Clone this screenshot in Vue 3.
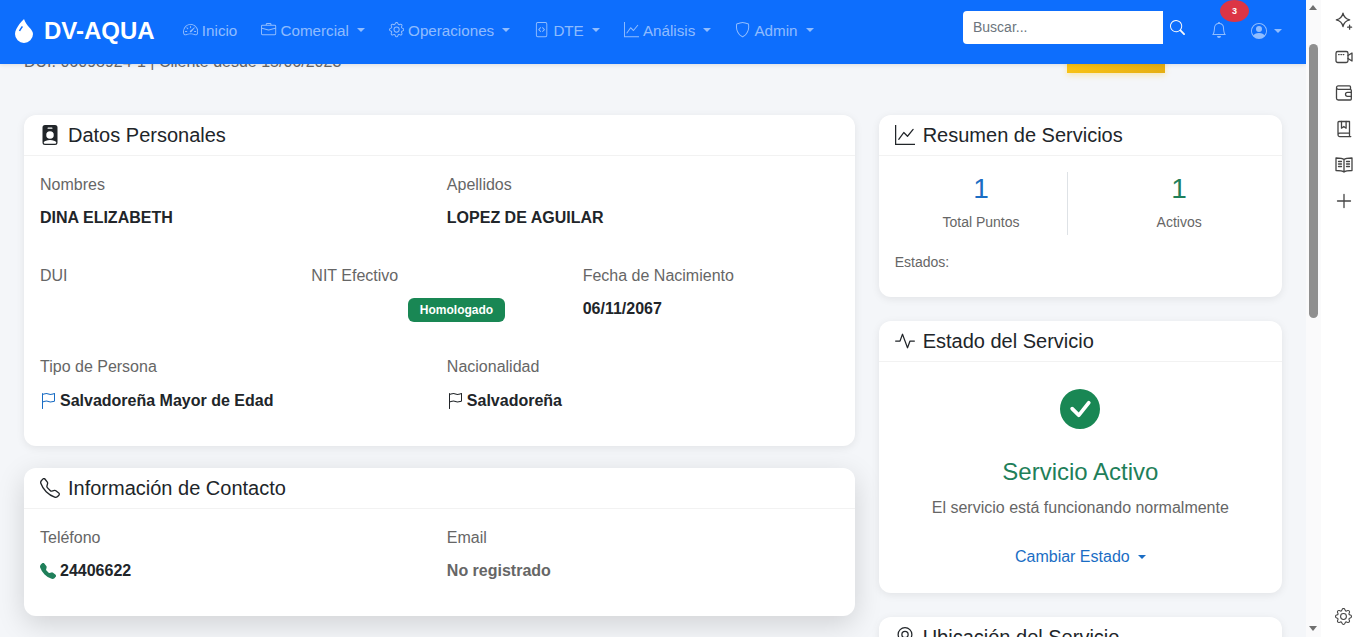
<template>
  <div class="page">
    <div class="main">
      <nav class="navbar">
        <div class="brand">
          <svg class="brand-icon" viewBox="0 0 16 16"><path :d="icons.droplet" /></svg>
          <span>DV-AQUA</span>
        </div>
        <ul class="nav-links">
          <li v-for="link in links" :key="link.label" class="nav-link">
            <svg class="nav-icon" viewBox="0 0 16 16"><path :d="icons[link.icon]" /></svg>
            <span>{{ link.label }}</span>
            <i v-if="link.menu" class="caret"></i>
          </li>
        </ul>
        <div class="nav-right">
          <div class="search-input">Buscar...</div>
          <svg class="search-icon" viewBox="0 0 16 16"><path :d="icons.search" /></svg>
          <div class="bell">
            <svg viewBox="0 0 16 16"><path :d="icons.bell" /></svg>
            <span class="badge-count">3</span>
          </div>
          <svg class="user-icon" viewBox="0 0 16 16"><path :d="icons.person" /></svg>
          <i class="caret user-caret"></i>
        </div>
      </nav>

      <div class="scroller">
        <header class="page-head">
          <p class="page-sub">DUI: 06098924-1 | Cliente desde 15/06/2023</p>
          <div class="edit-btn"></div>
        </header>

        <div class="columns">
          <div class="col">
            <section class="card">
              <h5 class="card-head">
                <svg class="head-icon" viewBox="0 0 16 16"><path :d="icons.badge" fill-rule="evenodd" /></svg>
                Datos Personales
              </h5>
              <div class="card-body">
                <div class="fields two">
                  <div class="field">
                    <div class="label">Nombres</div>
                    <div class="value">DINA ELIZABETH</div>
                  </div>
                  <div class="field">
                    <div class="label">Apellidos</div>
                    <div class="value">LOPEZ DE AGUILAR</div>
                  </div>
                </div>
                <div class="fields three">
                  <div class="field">
                    <div class="label">DUI</div>
                  </div>
                  <div class="field">
                    <div class="label">NIT Efectivo</div>
                    <div class="value"><span class="pill">Homologado</span></div>
                  </div>
                  <div class="field">
                    <div class="label">Fecha de Nacimiento</div>
                    <div class="value">06/11/2067</div>
                  </div>
                </div>
                <div class="fields two flags">
                  <div class="field">
                    <div class="label">Tipo de Persona</div>
                    <div class="value with-icon">
                      <svg class="val-icon blue" viewBox="0 0 16 16"><path :d="icons.flag" /></svg>
                      Salvadoreña Mayor de Edad
                    </div>
                  </div>
                  <div class="field">
                    <div class="label">Nacionalidad</div>
                    <div class="value with-icon">
                      <svg class="val-icon" viewBox="0 0 16 16"><path :d="icons.flag" /></svg>
                      Salvadoreña
                    </div>
                  </div>
                </div>
              </div>
            </section>

            <section class="card card-raised">
              <h5 class="card-head">
                <svg class="head-icon" viewBox="0 0 16 16"><path :d="icons.telephone" /></svg>
                Información de Contacto
              </h5>
              <div class="card-body">
                <div class="fields two">
                  <div class="field">
                    <div class="label">Teléfono</div>
                    <div class="value with-icon">
                      <svg class="val-icon green" viewBox="0 0 16 16"><path :d="icons.telephoneFill" /></svg>
                      24406622
                    </div>
                  </div>
                  <div class="field">
                    <div class="label">Email</div>
                    <div class="value muted">No registrado</div>
                  </div>
                </div>
              </div>
            </section>
          </div>

          <div class="col col-right">
            <section class="card">
              <h5 class="card-head">
                <svg class="head-icon" viewBox="0 0 16 16"><path :d="icons.graph" /></svg>
                Resumen de Servicios
              </h5>
              <div class="card-body summary">
                <div class="stats">
                  <div class="stat stat-split">
                    <div class="stat-num blue">1</div>
                    <div class="stat-label">Total Puntos</div>
                  </div>
                  <div class="stat">
                    <div class="stat-num green">1</div>
                    <div class="stat-label">Activos</div>
                  </div>
                </div>
                <div class="states">Estados:</div>
              </div>
            </section>

            <section class="card">
              <h5 class="card-head">
                <svg class="head-icon" viewBox="0 0 16 16"><path :d="icons.activity" /></svg>
                Estado del Servicio
              </h5>
              <div class="card-body status">
                <svg class="status-icon" viewBox="0 0 16 16"><path :d="icons.check" /></svg>
                <div class="status-title">Servicio Activo</div>
                <div class="status-text">El servicio está funcionando normalmente</div>
                <div class="status-btn">Cambiar Estado<i class="caret"></i></div>
              </div>
            </section>

            <section class="card">
              <h5 class="card-head">
                <svg class="head-icon" viewBox="0 0 16 16"><path :d="icons.geo" /></svg>
                Ubicación del Servicio
              </h5>
            </section>
          </div>
        </div>
      </div>
    </div>

    <div class="scrollbar">
      <i class="arrow-up"></i>
      <div class="thumb"></div>
      <i class="arrow-down"></i>
    </div>

    <aside class="side-panel">
      <div class="side-btn">
        <svg viewBox="0 0 20 20"><path d="M9 2.2c.8 3.9 2.8 5.9 6.7 6.7-3.9.8-5.9 2.8-6.7 6.7-.8-3.9-2.8-5.9-6.7-6.7 3.9-.8 5.9-2.8 6.7-6.7z" /><path d="M15.6 14.2v4M13.6 16.2h4" /></svg>
      </div>
      <div class="side-btn">
        <svg viewBox="0 0 20 20"><rect x="2" y="4.5" width="12" height="11" rx="1.8" /><path d="M14 8.5l4-2.500v8l-4-2.500M4.600 7.600h.6M6.900 7.600h.6M9.200 7.600h.6" /></svg>
      </div>
      <div class="side-btn">
        <svg viewBox="0 0 20 20"><path d="M2.500 5.500v9.700a1.800 1.800 0 0 0 1.800 1.800h12a1 1 0 0 0 1-1V7.300a1 1 0 0 0-1-1H4.200a1.700 1.700 0 0 1 0-3.400h11.300a1 1 0 0 1 1 1v2.400" /><path d="M17.300 9.300h-3.800a2 2 0 0 0 0 4h3.800" /></svg>
      </div>
      <div class="side-btn">
        <svg viewBox="0 0 20 20"><path d="M4 15V3.500a1 1 0 0 1 1-1h10.500v11.700H5.600A1.700 1.700 0 0 0 4 16a1.700 1.700 0 0 0 1.600 1.600h11.200M15.500 14.200v3.300" /><path d="M7.500 2.500v6.700l2.300-1.700 2.300 1.700V2.500" /></svg>
      </div>
      <div class="side-btn">
        <svg viewBox="0 0 20 20"><path d="M10 4.500C8.800 3.400 7 3 2 3v12.500c5 0 6.800.4 8 1.500 1.200-1.100 3-1.500 8-1.500V3c-5 0-6.800.4-8 1.500zM10 4.500V17" /><path d="M4.500 6.500h3M4.500 9h3M4.500 11.500h3M12.500 6.500h3M12.500 9h3M12.500 11.500h3" /></svg>
      </div>
      <div class="side-btn">
        <svg viewBox="0 0 20 20"><path d="M10 3.500v13M3.500 10h13" /></svg>
      </div>
      <div class="side-btn side-bottom">
        <svg class="side-fill" viewBox="0 0 16 16"><path :d="icons.gear" /></svg>
      </div>
    </aside>
  </div>
</template>

<script setup>
const icons = {
  droplet: 'M8 16a6 6 0 0 0 6-6c0-1.655-1.122-2.904-2.432-4.362C10.254 4.176 8.75 2.503 8 0c0 0-6 5.686-6 10a6 6 0 0 0 6 6M6.646 4.646l.708.708c-.29.29-1.128 1.311-1.907 2.87l-.894-.448c.82-1.641 1.717-2.753 2.093-3.13',
  speedometer: 'M8 4a.5.5 0 0 1 .5.5V6a.5.5 0 0 1-1 0V4.5A.5.5 0 0 1 8 4M3.732 5.732a.5.5 0 0 1 .707 0l.915.914a.5.5 0 1 1-.708.708l-.914-.915a.5.5 0 0 1 0-.707M2 10a.5.5 0 0 1 .5-.5h1.586a.5.5 0 0 1 0 1H2.5A.5.5 0 0 1 2 10m9.5 0a.5.5 0 0 1 .5-.5h1.5a.5.5 0 0 1 0 1H12a.5.5 0 0 1-.5-.5m.754-4.246a.39.39 0 0 0-.527-.02L7.547 9.31a.91.91 0 1 0 1.302 1.258l3.434-4.297a.39.39 0 0 0-.029-.518zM0 10a8 8 0 1 1 15.547 2.661c-.442 1.253-1.845 1.602-2.932 1.25C11.309 13.488 9.475 13 8 13c-1.474 0-3.31.488-4.615.911-1.087.352-2.49.003-2.932-1.25A8 8 0 0 1 0 10m8-7a7 7 0 0 0-6.603 9.329c.203.575.923.876 1.68.63C4.397 12.533 6.358 12 8 12s3.604.532 4.923.96c.757.245 1.477-.056 1.68-.631A7 7 0 0 0 8 3',
  briefcase: 'M6.5 1A1.5 1.5 0 0 0 5 2.5V3H1.5A1.5 1.5 0 0 0 0 4.5v8A1.5 1.5 0 0 0 1.5 14h13a1.5 1.5 0 0 0 1.5-1.5v-8A1.5 1.5 0 0 0 14.5 3H11v-.5A1.5 1.5 0 0 0 9.5 1zm0 1h3a.5.5 0 0 1 .5.5V3H6v-.5a.5.5 0 0 1 .5-.5m1.886 6.914L15 7.151V12.5a.5.5 0 0 1-.5.5h-13a.5.5 0 0 1-.5-.5V7.15l6.614 1.764a1.5 1.5 0 0 0 .772 0M1.5 4h13a.5.5 0 0 1 .5.5v1.616L8.129 7.948a.5.5 0 0 1-.258 0L1 6.116V4.5a.5.5 0 0 1 .5-.5',
  gear: 'M8 4.754a3.246 3.246 0 1 0 0 6.492 3.246 3.246 0 0 0 0-6.492M5.754 8a2.246 2.246 0 1 1 4.492 0 2.246 2.246 0 0 1-4.492 0M9.796 1.343c-.527-1.79-3.065-1.79-3.592 0l-.094.319a.873.873 0 0 1-1.255.52l-.292-.16c-1.64-.892-3.433.902-2.54 2.541l.159.292a.873.873 0 0 1-.52 1.255l-.319.094c-1.79.527-1.79 3.065 0 3.592l.319.094a.873.873 0 0 1 .52 1.255l-.16.292c-.892 1.64.901 3.434 2.541 2.54l.292-.159a.873.873 0 0 1 1.255.52l.094.319c.527 1.79 3.065 1.79 3.592 0l.094-.319a.873.873 0 0 1 1.255-.52l.292.16c1.64.893 3.434-.902 2.54-2.541l-.159-.292a.873.873 0 0 1 .52-1.255l.319-.094c1.79-.527 1.79-3.065 0-3.592l-.319-.094a.873.873 0 0 1-.52-1.255l.16-.292c.893-1.64-.902-3.433-2.541-2.54l-.292.159a.873.873 0 0 1-1.255-.52zm-2.633.283c.246-.835 1.428-.835 1.674 0l.094.319a1.873 1.873 0 0 0 2.693 1.115l.291-.16c.764-.415 1.6.42 1.184 1.185l-.159.292a1.873 1.873 0 0 0 1.116 2.692l.318.094c.835.246.835 1.428 0 1.674l-.319.094a1.873 1.873 0 0 0-1.115 2.693l.16.291c.415.764-.42 1.6-1.185 1.184l-.291-.159a1.873 1.873 0 0 0-2.693 1.116l-.094.318c-.246.835-1.428.835-1.674 0l-.094-.319a1.873 1.873 0 0 0-2.692-1.115l-.292.16c-.764.415-1.6-.42-1.184-1.185l.159-.291A1.873 1.873 0 0 0 1.945 8.93l-.319-.094c-.835-.246-.835-1.428 0-1.674l.319-.094A1.873 1.873 0 0 0 3.06 4.377l-.16-.292c-.415-.764.42-1.6 1.185-1.184l.292.159a1.873 1.873 0 0 0 2.692-1.115z',
  fileCode: 'M6.646 5.646a.5.5 0 1 1 .708.708L5.707 8l1.647 1.646a.5.5 0 0 1-.708.708l-2-2a.5.5 0 0 1 0-.708zm2.708 0a.5.5 0 1 0-.708.708L10.293 8 8.646 9.646a.5.5 0 0 0 .708.708l2-2a.5.5 0 0 0 0-.708zM2 2a2 2 0 0 1 2-2h8a2 2 0 0 1 2 2v12a2 2 0 0 1-2 2H4a2 2 0 0 1-2-2zm10-1H4a1 1 0 0 0-1 1v12a1 1 0 0 0 1 1h8a1 1 0 0 0 1-1V2a1 1 0 0 0-1-1',
  graph: 'M0 0h1v15h15v1H0zm14.817 3.113a.5.5 0 0 1 .07.704l-4.5 5.5a.5.5 0 0 1-.74.037L7.06 6.767l-3.656 5.027a.5.5 0 0 1-.808-.588l4-5.5a.5.5 0 0 1 .758-.06l2.609 2.61 4.15-5.073a.5.5 0 0 1 .704-.07',
  shield: 'M5.338 1.59a61 61 0 0 0-2.837.856.48.48 0 0 0-.328.39c-.554 4.157.726 7.19 2.253 9.188a10.7 10.7 0 0 0 2.287 2.233c.346.244.652.42.893.533q.18.085.293.118a1 1 0 0 0 .101.025 1 1 0 0 0 .1-.025q.114-.034.294-.118c.24-.113.547-.29.893-.533a10.7 10.7 0 0 0 2.287-2.233c1.527-1.997 2.807-5.031 2.253-9.188a.48.48 0 0 0-.328-.39c-.651-.213-1.75-.56-2.837-.855C9.552 1.29 8.531 1.067 8 1.067c-.53 0-1.552.223-2.662.524zM5.072.56C6.157.265 7.31 0 8 0s1.843.265 2.928.56c1.11.3 2.229.655 2.887.87a1.54 1.54 0 0 1 1.044 1.262c.596 4.477-.787 7.795-2.465 9.99a11.8 11.8 0 0 1-2.517 2.453 7 7 0 0 1-1.048.625c-.28.132-.581.24-.829.24s-.548-.108-.829-.24a7 7 0 0 1-1.048-.625 11.8 11.8 0 0 1-2.517-2.453C1.928 10.487.545 7.169 1.141 2.692A1.54 1.54 0 0 1 2.185 1.43 63 63 0 0 1 5.072.56',
  search: 'M11.742 10.344a6.5 6.5 0 1 0-1.397 1.398h-.001q.044.06.098.115l3.85 3.85a1 1 0 0 0 1.415-1.414l-3.85-3.85a1 1 0 0 0-.115-.1zM12 6.5a5.5 5.5 0 1 1-11 0 5.5 5.5 0 0 1 11 0',
  bell: 'M8 16a2 2 0 0 0 2-2H6a2 2 0 0 0 2 2M8 1.918l-.797.161A4 4 0 0 0 4 6c0 .628-.134 2.197-.459 3.742-.16.767-.376 1.566-.663 2.258h10.244c-.287-.692-.502-1.49-.663-2.258C12.134 8.197 12 6.628 12 6a4 4 0 0 0-3.203-3.92zM14.22 12c.223.447.481.801.78 1H1c.299-.199.557-.553.78-1C2.68 10.2 3 6.880 3 6c0-2.420 1.720-4.440 4.005-4.901a1 1 0 1 1 1.990 0A5 5 0 0 1 13 6c0 .880.320 4.200 1.220 6',
  person: 'M11 6a3 3 0 1 1-6 0 3 3 0 0 1 6 0M0 8a8 8 0 1 1 16 0A8 8 0 0 1 0 8m8-7a7 7 0 0 0-5.468 11.370C3.242 11.226 4.805 10 8 10s4.757 1.225 5.468 2.370A7 7 0 0 0 8 1',
  badge: 'M2 2a2 2 0 0 1 2-2h8a2 2 0 0 1 2 2v12a2 2 0 0 1-2 2H4a2 2 0 0 1-2-2zm4.500 0a.5.5 0 0 0 0 1h3a.5.5 0 0 0 0-1zM8 11a3 3 0 1 0 0-6 3 3 0 0 0 0 6m5 2.755C12.146 12.825 10.623 12 8 12s-4.146.826-5 1.755V14a1 1 0 0 0 1 1h8a1 1 0 0 0 1-1z',
  flag: 'M14.778.085A.5.5 0 0 1 15 .5V8a.5.5 0 0 1-.314.464L14.500 8l.186.464-.003.001-.006.003-.023.009a12 12 0 0 1-.397.150c-.264.095-.631.223-1.047.350-.816.252-1.879.523-2.710.523-.847 0-1.548-.280-2.158-.525l-.028-.010C7.680 8.710 7.140 8.500 6.500 8.500c-.700 0-1.638.230-2.437.477A20 20 0 0 0 3 9.342V15.500a.5.5 0 0 1-1 0V.500a.5.5 0 0 1 1 0v.282c.226-.079.496-.170.790-.260C4.606.272 5.670 0 6.500 0c.840 0 1.524.277 2.121.519l.043.018C9.286.788 9.828 1 10.500 1c.700 0 1.638-.230 2.437-.477a20 20 0 0 0 1.349-.476l.019-.007.004-.002h.001M14 1.221c-.220.078-.480.167-.766.255-.810.252-1.872.523-2.734.523-.886 0-1.592-.286-2.203-.534l-.008-.003C7.662 1.210 7.139 1 6.500 1c-.669 0-1.606.229-2.415.478A21 21 0 0 0 3 1.845v6.433c.220-.078.480-.167.766-.255C4.576 7.770 5.638 7.500 6.500 7.500c.847 0 1.548.280 2.158.525l.028.010C9.320 8.290 9.860 8.500 10.500 8.500c.668 0 1.606-.229 2.415-.478A21 21 0 0 0 14 7.655V1.222z',
  telephone: 'M3.654 1.328a.678.678 0 0 0-1.015-.063L1.605 2.300c-.483.484-.661 1.169-.450 1.770a17.600 17.600 0 0 0 4.168 6.608 17.600 17.600 0 0 0 6.608 4.168c.601.211 1.286.033 1.770-.450l1.034-1.034a.678.678 0 0 0-.063-1.015l-2.307-1.794a.68.68 0 0 0-.580-.122l-2.190.547a1.750 1.750 0 0 1-1.657-.459L5.482 8.062a1.750 1.750 0 0 1-.460-1.657l.548-2.190a.68.68 0 0 0-.122-.580zM1.884.511a1.745 1.745 0 0 1 2.612.163L6.290 2.980c.329.423.445.974.315 1.494l-.547 2.190a.68.68 0 0 0 .178.643l2.457 2.457a.68.68 0 0 0 .644.178l2.189-.547a1.750 1.750 0 0 1 1.494.315l2.306 1.794c.829.645.905 1.870.163 2.611l-1.034 1.034c-.740.740-1.846 1.065-2.877.702a18.600 18.600 0 0 1-7.010-4.420 18.600 18.600 0 0 1-4.420-7.009c-.362-1.030-.037-2.137.703-2.877z',
  telephoneFill: 'M1.885.511a1.745 1.745 0 0 1 2.610.163L6.290 2.980c.329.423.445.974.315 1.494l-.547 2.190a.68.68 0 0 0 .178.643l2.457 2.457a.68.68 0 0 0 .644.178l2.189-.547a1.750 1.750 0 0 1 1.494.315l2.306 1.794c.829.645.905 1.870.163 2.611l-1.034 1.034c-.740.740-1.846 1.065-2.877.702a18.600 18.600 0 0 1-7.010-4.420 18.600 18.600 0 0 1-4.420-7.009c-.362-1.030-.037-2.137.703-2.877z',
  activity: 'M6 2a.5.5 0 0 1 .470.330L10 12.036l1.530-4.208A.5.5 0 0 1 12 7.500h3.500a.5.5 0 0 1 0 1h-3.150l-1.880 5.170a.5.5 0 0 1-.940 0L6 3.964 4.470 8.171A.5.5 0 0 1 4 8.500H.5a.5.5 0 0 1 0-1h3.150l1.880-5.170A.5.5 0 0 1 6 2',
  check: 'M16 8A8 8 0 1 1 0 8a8 8 0 0 1 16 0m-3.970-3.030a.750.750 0 0 0-1.080.022L7.477 9.417 5.384 7.323a.750.750 0 0 0-1.060 1.060L6.970 11.030a.750.750 0 0 0 1.079-.020l3.992-4.990a.750.750 0 0 0-.010-1.050z',
  geo: 'M12.166 8.940c-.524 1.062-1.234 2.120-1.960 3.070A32 32 0 0 1 8 14.580a32 32 0 0 1-2.206-2.570c-.726-.950-1.436-2.008-1.960-3.070C3.304 7.867 3 6.862 3 6a5 5 0 0 1 10 0c0 .862-.305 1.867-.834 2.940M8 16s6-5.686 6-10A6 6 0 0 0 2 6c0 4.314 6 10 6 10M8 8a2 2 0 1 1 0-4 2 2 0 0 1 0 4m0 1a3 3 0 1 0 0-6 3 3 0 0 0 0 6'
}

const links = [
  { label: 'Inicio', icon: 'speedometer', menu: false },
  { label: 'Comercial', icon: 'briefcase', menu: true },
  { label: 'Operaciones', icon: 'gear', menu: true },
  { label: 'DTE', icon: 'fileCode', menu: true },
  { label: 'Análisis', icon: 'graph', menu: true },
  { label: 'Admin', icon: 'shield', menu: true }
]
</script>

<style>
html, body {
  margin: 0;
  height: 100%;
  overflow: hidden;
  background: #fff;
}
</style>

<style scoped>
.page {
  display: flex;
  height: 100vh;
  font-family: "Liberation Sans", Arial, sans-serif;
  font-size: 16px;
  color: #212529;
}
.main {
  width: 1306px;
  display: flex;
  flex-direction: column;
  background: #f4f6f9;
  overflow: hidden;
}

/* navbar */
.navbar {
  flex: none;
  height: 64px;
  box-sizing: border-box;
  display: flex;
  align-items: center;
  padding: 0 24px 2px 12px;
  background: #0d6efd;
  box-shadow: 0 1px 4px rgba(0, 0, 0, 0.1);
  position: relative;
  z-index: 2;
}
.brand {
  display: flex;
  align-items: center;
  gap: 8px;
  font-size: 24px;
  font-weight: 700;
  color: #fff;
}
.brand-icon {
  width: 24px;
  height: 24px;
  fill: #fff;
}
.nav-links {
  display: flex;
  list-style: none;
  margin: 0 0 2px 16px;
  padding: 0;
}
.nav-link {
  display: flex;
  align-items: center;
  gap: 4px;
  padding: 0 12px;
  font-size: 15.2px;
  color: rgba(255, 255, 255, 0.55);
}
.nav-icon {
  width: 15.2px;
  height: 15.2px;
  fill: currentColor;
}
.caret {
  width: 0;
  height: 0;
  margin-left: 4px;
  border-top: 4.8px solid currentColor;
  border-left: 4.8px solid transparent;
  border-right: 4.8px solid transparent;
}
.nav-right {
  margin-left: auto;
  display: flex;
  align-items: center;
  height: 62px;
  color: rgba(255, 255, 255, 0.55);
}
.search-input {
  align-self: flex-start;
  margin-top: 11px;
  width: 200px;
  height: 33px;
  box-sizing: border-box;
  padding-left: 10px;
  line-height: 32px;
  font-size: 14px;
  color: #6c757d;
  background: #fff;
  border-radius: 4px 0 0 4px;
}
.search-icon {
  align-self: flex-start;
  margin: 20px 0 0 7px;
  width: 15px;
  height: 15px;
  fill: #f8f9fa;
}
.bell {
  position: relative;
  align-self: flex-start;
  margin: 22px 0 0 26px;
  width: 16px;
  height: 16px;
}
.bell svg {
  display: block;
  width: 16px;
  height: 16px;
  fill: currentColor;
}
.badge-count {
  position: absolute;
  left: 9px;
  top: -22px;
  width: 29px;
  height: 22px;
  border-radius: 50%;
  background: #dc3545;
  color: #fff;
  font-size: 9px;
  font-weight: 700;
  line-height: 22px;
  text-align: center;
}
.user-icon {
  margin-left: 24px;
  width: 16px;
  height: 16px;
  fill: currentColor;
}
.user-caret {
  margin-left: 7px;
}

/* content */
.scroller {
  flex: 1;
  min-height: 0;
  overflow: hidden;
  padding: 0 24px;
}
.page-head {
  display: flex;
  justify-content: space-between;
  align-items: flex-end;
  height: 38px;
  margin-top: -29px;
  margin-bottom: 42px;
  padding-right: 117px;
}
.page-sub {
  margin: 0 0 -1px;
  line-height: 24px;
  color: #666;
}
.edit-btn {
  width: 98px;
  height: 38px;
  background: linear-gradient(100deg, #f9c316, #e5ae12);
  box-shadow: 0 2px 6px rgba(255, 193, 7, 0.3);
}
.columns {
  display: grid;
  grid-template-columns: 830.67px 403.33px;
  gap: 24px;
  align-items: start;
}
.col {
  display: flex;
  flex-direction: column;
  gap: 22px;
}
.col-right {
  gap: 24px;
}
.card {
  flex: none;
  background: #fff;
  border-radius: 12px;
  box-shadow: 0 2px 8px rgba(0, 0, 0, 0.08);
}
.card-raised {
  box-shadow: 0 8px 28px rgba(0, 0, 0, 0.15);
}
.card-raised .field {
  margin-bottom: 33px;
}
.card-head {
  display: flex;
  align-items: center;
  gap: 8px;
  margin: 0;
  padding: 8px 16px;
  height: 24px;
  line-height: 24px;
  font-size: 20px;
  font-weight: 400;
  color: #212529;
  border-bottom: 1px solid rgba(0, 0, 0, 0.05);
}
.head-icon {
  width: 20px;
  height: 20px;
  fill: #212529;
}
.card-body {
  padding: 17px 16px 0;
}
.fields {
  display: grid;
  column-gap: 15px;
}
.fields.two {
  grid-template-columns: repeat(2, 1fr);
}
.fields.three {
  grid-template-columns: repeat(3, 1fr);
  column-gap: 15.4px;
}
.field {
  height: 57px;
  margin-bottom: 34px;
}
.label {
  line-height: 24px;
  margin-bottom: 9px;
  color: #666;
}
.flags .label {
  margin-bottom: 10px;
}
.value {
  line-height: 24px;
  font-weight: 700;
  color: #212529;
}
.value.muted {
  color: #666;
}
.with-icon {
  display: flex;
  align-items: center;
  gap: 4px;
}
.val-icon {
  width: 16px;
  height: 16px;
  fill: #212529;
}
.val-icon.blue {
  fill: #1a6dc4;
}
.val-icon.green {
  fill: #1f7f5a;
}
.pill {
  display: inline-block;
  margin-left: 97px;
  padding: 0 11.5px;
  line-height: 24px;
  font-size: 12px;
  color: #fff;
  background: #198754;
  border-radius: 6px;
}

/* summary */
.summary {
  padding: 16px 16px 24px;
}
.stats {
  display: grid;
  grid-template-columns: repeat(2, 1fr);
  column-gap: 24px;
}
.stat {
  height: 63px;
  text-align: center;
}
.stat-split {
  border-right: 1px solid #dee2e6;
}
.stat-num {
  font-size: 28px;
  line-height: 34px;
}
.stat-num.blue {
  color: #1a6dc4;
}
.stat-num.green {
  color: #1f7f5a;
}
.stat-label {
  margin-top: 6px;
  line-height: 21px;
  font-size: 14px;
  color: #666;
}
.states {
  margin-top: 17px;
  line-height: 21px;
  font-size: 14px;
  color: #666;
}

/* status */
.status {
  display: flex;
  flex-direction: column;
  align-items: center;
  padding: 27px 16px 17px;
}
.status-icon {
  width: 40px;
  height: 40px;
  fill: #198754;
}
.status-title {
  margin-top: 28px;
  font-size: 24px;
  line-height: 29px;
  color: #1f7f5a;
}
.status-text {
  margin-top: 10px;
  line-height: 24px;
  color: #666;
}
.status-btn {
  display: flex;
  align-items: center;
  gap: 4px;
  margin-top: 18px;
  height: 38px;
  color: #1a6dc4;
}

/* browser chrome */
.scrollbar {
  position: relative;
  width: 15px;
  flex: none;
  background: #fafafb;
}
.thumb {
  width: 9px;
  height: 274px;
  margin: 44px 0 0 3px;
  border-radius: 5px;
  background: #8f8f8f;
}
.arrow-up,
.arrow-down {
  position: absolute;
  left: 3px;
  width: 0;
  height: 0;
  border-left: 4.5px solid transparent;
  border-right: 4.5px solid transparent;
}
.arrow-up {
  top: 5px;
  border-bottom: 5px solid #6f6f6f;
}
.arrow-down {
  bottom: 6px;
  border-top: 5px solid #6f6f6f;
}
.side-panel {
  flex: 1;
  display: flex;
  flex-direction: column;
  align-items: center;
  padding: 3px 0;
  background: #fff;
}
.side-btn {
  height: 36px;
  display: flex;
  align-items: center;
  justify-content: center;
}
.side-btn svg {
  width: 20px;
  height: 20px;
  fill: none;
  stroke: #444;
  stroke-width: 1.3;
  stroke-linecap: round;
  stroke-linejoin: round;
}
.side-btn .side-fill {
  width: 17px;
  height: 17px;
  fill: #444;
  stroke: none;
}
.side-bottom {
  margin-top: auto;
}
</style>
